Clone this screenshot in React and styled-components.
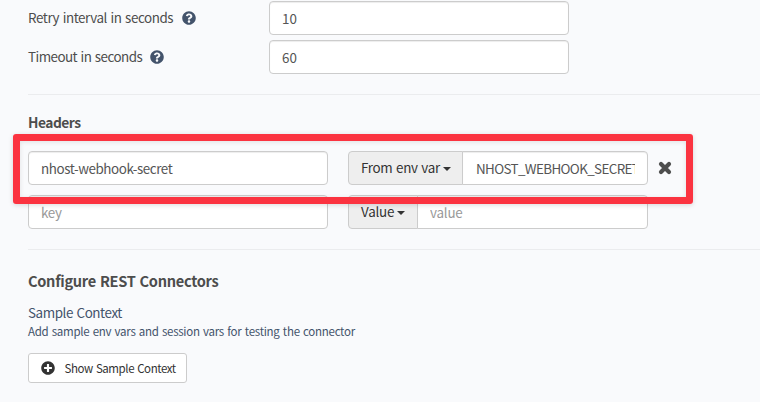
import React from "react";
import styled, { createGlobalStyle } from "styled-components";
import { FaQuestionCircle, FaPlusCircle } from "react-icons/fa";

const GlobalStyle = createGlobalStyle`
  * { box-sizing: border-box; }
  body {
    margin: 0;
    background: #f9fafc;
    color: #4d4d4d;
    font-family: "Noto Sans CJK SC", sans-serif;
    font-size: 13.4px;
    line-height: 20px;
    overflow: hidden;
  }
`;

const Page = styled.main`
  height: 402px;
  padding: 1px 0 0 28px;
  overflow: hidden;
`;

const Text = styled.span`
  white-space: nowrap;
  letter-spacing: ${(p) => p.$track || 0}px;
  word-spacing: 1px;
`;

const SettingRow = styled.div`
  display: flex;
  height: 34px;
  margin-bottom: 5px;
`;

const SettingLabel = styled.label`
  display: flex;
  align-items: center;
  gap: ${(p) => p.$gap}px;
  width: 241px;
  height: 32px;
  svg { color: #43536b; margin-top: 2px; }
`;

const Input = styled.input`
  width: 300px;
  height: 34px;
  padding: 0 12px;
  border: 1px solid #ccc;
  border-radius: 4px;
  background: #fff;
  box-shadow: inset 0 1px 1px rgba(0, 0, 0, 0.075);
  color: #555;
  font: inherit;
  letter-spacing: ${(p) => p.$track || 0}px;
  outline: none;
  &::placeholder { color: #999; opacity: 1; }
`;

const Divider = styled.hr`
  height: 1px;
  margin: ${(p) => p.$top || 0}px 0 0;
  border: 0;
  background: #ebecee;
`;

const SectionTitle = styled.h2`
  margin: ${(p) => p.$top}px 0 0;
  font-size: ${(p) => p.$size}px;
  line-height: 20px;
  font-weight: 700;
`;

const HeaderList = styled.div`
  position: relative;
  display: flex;
  flex-direction: column;
  gap: 10px;
  margin: 19px 0 20px;
`;

const HeaderRow = styled.div`
  display: flex;
  align-items: center;
  gap: 20px;
  height: 34px;
`;

const InputGroup = styled.div`
  display: flex;
  width: 300px;
  ${Input} {
    flex: 1;
    min-width: 0;
    margin-left: -1px;
    padding-left: ${(p) => p.$pad || 12}px;
    border-radius: 0 4px 4px 0;
  }
`;

const SelectButton = styled.button`
  display: flex;
  align-items: center;
  gap: 3px;
  width: ${(p) => p.$width}px;
  height: 34px;
  padding: 0 0 2px 12px;
  border: 1px solid #ccc;
  border-radius: 4px 0 0 4px;
  background: #eee;
  color: #333;
  font: inherit;
`;

const Caret = styled.i`
  margin-top: 4px;
  border: 4px solid transparent;
  border-top-color: #333;
  border-bottom: 0;
`;

const RemoveIcon = styled.svg`
  width: 14px;
  height: 14px;
  margin-left: -10px;
`;

const Highlight = styled.div`
  position: absolute;
  top: -17px;
  left: -15px;
  width: 680px;
  height: 70px;
  border: 7px solid #fb3340;
  border-radius: 3px;
  box-shadow: 0 1px 5px rgba(0, 0, 0, 0.15), inset 0 1px 5px rgba(0, 0, 0, 0.1);
  pointer-events: none;
`;

const ContextTitle = styled.div`
  margin-top: 11px;
  color: #43536b;
`;

const ContextHint = styled.div`
  color: #43536b;
  font-size: 11.5px;
  line-height: 18px;
`;

const ContextButton = styled.button`
  display: flex;
  align-items: center;
  gap: 9.5px;
  width: 159px;
  height: 30px;
  margin-top: 13px;
  padding: 0 0 0 12px;
  border: 1px solid #ccc;
  border-radius: 3px;
  background: #fff;
  color: #333;
  font: inherit;
  font-size: 11.5px;
  svg { flex: none; }
`;

export default function App() {
  return (
    <>
      <GlobalStyle />
      <Page>
        <SettingRow>
          <SettingLabel $gap={9}>
            <Text $track={-0.43}>Retry interval in seconds</Text>
            <FaQuestionCircle size={14} />
          </SettingLabel>
          <Input defaultValue="10" />
        </SettingRow>
        <SettingRow>
          <SettingLabel $gap={8}>
            <Text $track={-0.53}>Timeout in seconds</Text>
            <FaQuestionCircle size={14} />
          </SettingLabel>
          <Input defaultValue="60" />
        </SettingRow>
        <Divider $top={20} />
        <SectionTitle $size={13.8} $top={17}><Text $track={-0.5}>Headers</Text></SectionTitle>
        <HeaderList>
          <HeaderRow>
            <Input defaultValue="nhost-webhook-secret" $track={-0.42} />
            <InputGroup $pad={13}>
              <SelectButton $width={115}><Text $track={-0.32}>From env var</Text><Caret /></SelectButton>
              <Input defaultValue="NHOST_WEBHOOK_SECRET" $track={-0.62} />
            </InputGroup>
            <RemoveIcon viewBox="0 0 14 14">
              <path d="M3 3L11 11M11 3L3 11" stroke="#4d4d4d" strokeWidth="4.2" strokeLinecap="round" />
            </RemoveIcon>
          </HeaderRow>
          <HeaderRow>
            <Input placeholder="key" $track={-0.3} />
            <InputGroup>
              <SelectButton $width={70}><Text $track={-0.2}>Value</Text><Caret /></SelectButton>
              <Input placeholder="value" $track={-0.2} />
            </InputGroup>
          </HeaderRow>
          <Highlight />
        </HeaderList>
        <Divider />
        <SectionTitle $size={14.6} $top={21}><Text $track={-0.3}>Configure REST Connectors</Text></SectionTitle>
        <ContextTitle><Text $track={-0.42}>Sample Context</Text></ContextTitle>
        <ContextHint><Text $track={-0.27}>Add sample env vars and session vars for testing the connector</Text></ContextHint>
        <ContextButton>
          <FaPlusCircle size={14} />
          <Text $track={-0.43}>Show Sample Context</Text>
        </ContextButton>
      </Page>
    </>
  );
}
